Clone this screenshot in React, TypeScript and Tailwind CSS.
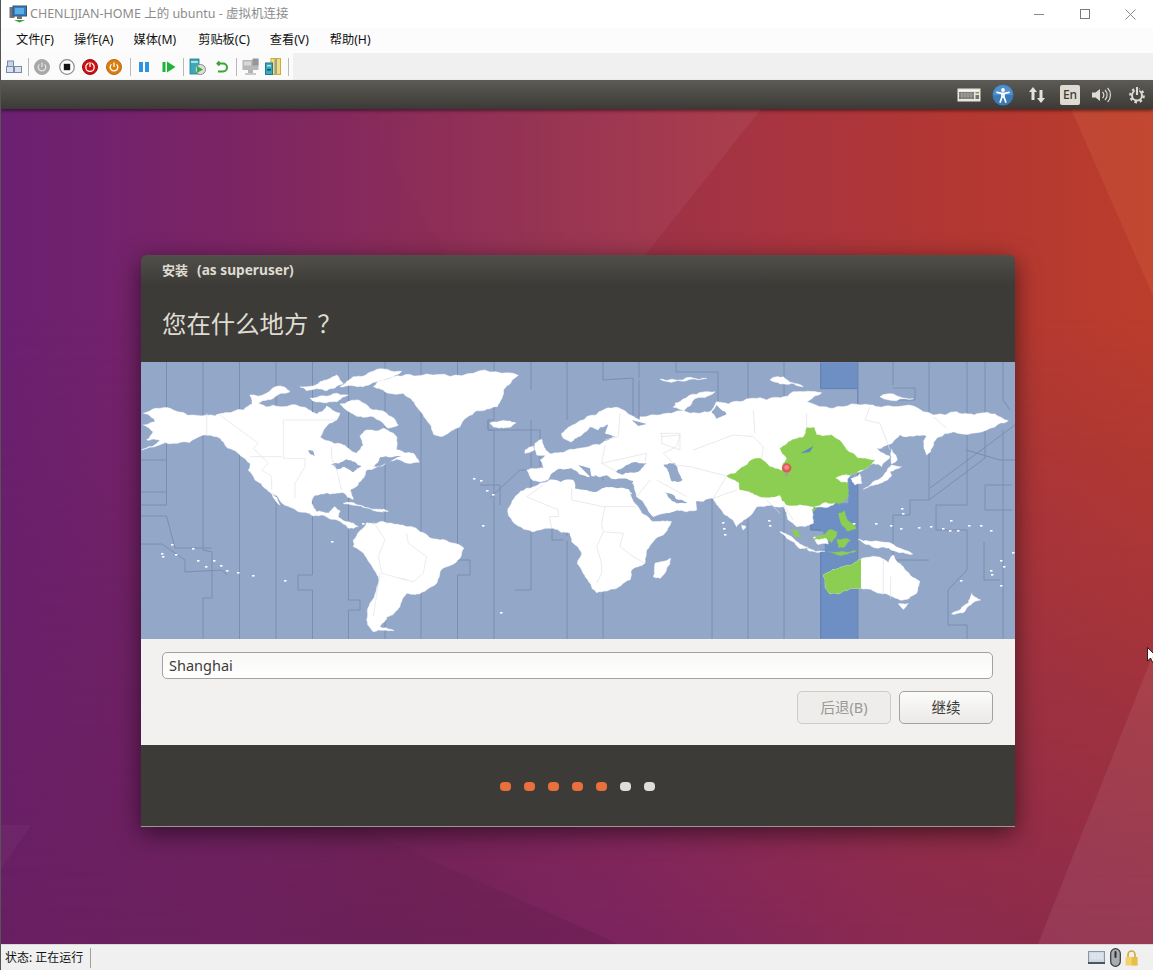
import React from "react";

const OCEAN = "#93a8c9";
const T_A = "translate(140 250) scale(0.3333)";
const T_B = "translate(490 400) scale(0.3333)";
const T_C = "translate(580 350) scale(0.3333)";

// irregular coastline: subdivides each edge with a seeded midpoint offset
const blob = (s: string) => {
  let p = s.trim().split(/\s+/).map((q) => q.split(",").map(Number));
  let seed = 7;
  for (const c of s) seed = (seed * 31 + c.charCodeAt(0)) % 233280;
  const rnd = () => {
    seed = (seed * 9301 + 49297) % 233280;
    return seed / 233280 - 0.5;
  };
  for (let it = 0; it < 3; it++) {
    const out: number[][] = [];
    for (let i = 0; i < p.length; i++) {
      const a = p[i];
      const b = p[(i + 1) % p.length];
      const dx = b[0] - a[0];
      const dy = b[1] - a[1];
      const k = rnd() * 0.24;
      out.push(a, [(a[0] + b[0]) / 2 - dy * k, (a[1] + b[1]) / 2 + dx * k]);
    }
    p = out;
  }
  return "M" + p.map((q) => `${q[0].toFixed(1)} ${q[1].toFixed(1)}`).join("L") + "Z";
};
const B = ({ p }: { p: string }) => <path d={blob(p)} />;

const AUS = "730,675 790,650 842,628 890,620 925,640 940,615 970,650 1020,695 1010,730 960,750 900,730 843,715 800,722 750,732 735,700";

const WorldMap = () => (
  <svg viewBox="141 362 874 277" width="874" height="277" className="block blur-[0.35px]">
    <rect x="141" y="362" width="874" height="277" fill={OCEAN} />
    <g transform={T_C}>
      <path d="M722 37H833V866H722V600L735 598L730 545L692 540V460H805V380H833V116H722Z" fill="#6e8fc4" />
      <path d="M722 37V116H833V37M722 866V600M833 116V866M692 460V540H722" fill="none" stroke="#5f7fb2" strokeWidth="3" />
    </g>
    <g stroke="#7a8eb0" strokeWidth="1" fill="none">
      <path d="M166.5 362V505H141M203 362V550L212 552V598H203V639M239.5 362V639M276 362V639M312.5 362V575H298V590H312.5V639M348.5 362V600H360V610H348.5V639M385 362V639M421 362V639M457.5 362V560H470V575H457.5V639M494 362V420H488V430H494V639M531 362V390M531 420V590H515M567 362V420M567 470V639" />
      <path d="M141 460H166.5V492H141M141 516H166.5L175 548H212M141 544H162L185 560V572L222 570L227 575" />
      <path d="M488 420V430H540V470M490 498L520 470H531M480 485H500V505M567 470V520H552V540H567" />
      <path d="M603 362V380L633 378V420H603V639M639 362V378M639 380V445L603 470M676 362V372H718V400L712 420V639M748 362V400M748 425V639M784 362V639" />
      <path d="M858 362V639M893 530V515H910V500H929V362M893 530V560H929M893 362V385M893 388H915V400H893M967 362V505H936V530H967V570L948 590V625H967V639M1003 362V400L1010 410M1003 430V639M985 485H1012M985 485V510H1012M984 542V580H1000M929 500L985 458V362" />
      <path d="M930 488L1015 425M966 450L1000 460H1015" />
    </g>

    {/* land */}
    <g transform={T_A} fill="#fff" stroke="#fff" strokeWidth="1.5" strokeLinejoin="round">
      <B p="5,600 60,572 20,570 40,545 10,525 45,515 10,490 90,475 200,495 250,490 310,480 340,460 420,470 480,470 530,492 560,468 600,490 590,510 555,535 540,562 580,580 625,595 650,610 670,585 660,560 680,540 730,535 770,560 770,600 820,610 838,637 770,628 740,640 680,660 665,690 630,720 640,748 610,728 560,728 525,735 515,760 530,785 565,790 585,770 600,782 595,800 625,815 655,830 625,835 580,808 520,798 470,782 430,762 395,725 420,765 380,718 345,690 325,660 330,640 300,615 265,595 240,565 190,555 100,580" />
      <B p="640,870 680,818 720,815 780,825 840,845 900,870 972,895 960,925 900,965 890,1000 850,1025 800,1030 780,1070 740,1100 720,1130 762,1142 700,1145 680,1110 690,1060 715,980 690,940 640,890" />
      <B p="700,410 760,380 860,372 1000,370 1135,376 1090,420 1072,470 1010,482 960,530 910,558 880,552 860,510 830,470 790,430 730,420" />
      <B p="330,435 420,408 450,425 400,445 340,468" />
      <B p="600,410 640,380 700,364 785,364 730,390 670,410" />
      <B p="480,410 540,395 590,375 610,400 560,422 500,422" />
      <B p="510,445 590,430 625,435 590,455 530,456" />
      <B p="600,462 660,452 700,480 762,505 775,525 745,535 700,500 640,492" />
      <B p="1050,520 1090,512 1125,518 1095,532 1060,530" />
      <B p="610,760 660,766 700,782 730,786 695,778 640,766" />
      <B p="715,778 745,784 720,786" />
    </g>
    <g transform={T_B} fill="#fff" stroke="#fff" strokeWidth="1.5" strokeLinejoin="round">
      <B p="55,325 75,290 110,265 150,250 190,235 250,235 255,265 320,275 345,250 410,250 425,280 455,340 490,365 545,365 520,405 470,450 465,490 425,510 420,540 380,565 320,578 300,550 275,510 262,490 275,460 245,425 240,400 190,385 125,395 80,375 55,345" />
      <B p="110,210 160,205 150,180 190,160 240,148 330,135 340,125 345,110 300,80 265,110 245,125 220,115 215,100 240,80 290,50 340,30 400,30 450,60 600,40 620,330 560,330 490,350 440,290 430,250 350,225 170,240 130,242" />
      <B p="105,150 130,138 132,150 105,160" />
      <B p="135,130 155,118 165,145 188,165 140,165" />
      <B p="5,68 40,62 78,68 60,82 20,82" />
      <B p="490,530 495,490 542,475 530,505 510,535" />
      <B p="555,10 590,-5 595,18 570,28" />
    </g>
    <g transform={T_C} fill="#fff" stroke="#fff" strokeWidth="1.5" strokeLinejoin="round">
      <B p="180,200 230,198 280,190 330,190 390,185 410,155 480,155 560,150 640,125 725,128 680,155 760,175 870,165 940,170 1060,195 1130,185 1200,190 1285,212 1230,235 1120,245 1095,250 1070,265 1040,315 1030,272 1000,272 960,285 890,295 930,320 905,350 880,340 850,360 810,375 800,400 795,440 760,465 700,470 698,500 700,520 650,530 625,510 610,470 575,465 530,470 490,510 470,530 430,490 400,445 340,450 280,490 200,470 180,300" />
      <B p="280,172 330,135 405,125 340,150 310,182" />
      <B p="570,90 610,80 670,110 600,102" />
      <B p="240,88 330,82 380,85 310,94" />
      <B p="900,140 1000,146 920,132" />
      <B p="600,545 640,565 685,592 662,596 620,565" />
      <B p="680,596 735,604 690,604" />
      <B p="700,562 740,562 745,582 715,584" />
      <B p="835,568 900,575 998,612 940,602 880,592" />
      <B p={AUS} />
      <B p="955,762 985,760 970,778" />
      <B p="1115,792 1165,760 1175,730 1202,750 1150,788" />
    </g>

    {/* seas */}
    <g transform={T_A} fill={OCEAN}>
      <B p="570,642 620,628 665,648 640,667 610,650 590,658" />
      <B p="505,600 520,603 525,618 510,612" />
      <B p="720,622 790,618 745,640 700,652" />
    </g>
    <g transform={T_B} fill={OCEAN}>
      <B p="175,238 200,210 245,205 265,220 300,240 320,255 315,225 345,245 430,243 425,270 355,262 320,275 255,265 250,240" />
      <polygon points="265,195 300,205 305,235" />
      <B p="378,215 410,195 470,190 445,215 395,224" />
      <B p="520,195 555,190 578,240 545,244 535,215" />
      <polygon points="420,280 445,298 494,358 470,342 430,302" />
      <polygon points="480,356 560,332 558,345 497,364" />
      <B p="525,275 560,298 592,308 560,310 535,292" />
      <B p="298,122 330,82 355,72 345,100 378,108 340,125 320,132" />
      <polygon points="425,60 470,72 445,78" />
      <polygon points="215,425 238,400 245,420" />
    </g>
    <g transform={T_C} fill={OCEAN}>
      <B p="440,192 410,165 395,188 410,207" />
      <B p="905,292 960,255 1040,258 1030,272 1040,318 945,322" />
    </g>
    <g transform={T_C} fill="#fff" stroke="#fff" strokeWidth="1.5">
      <B p="850,418 900,400 935,378 930,365 965,350 935,345 915,370 880,395" />
      <B p="935,298 952,330 935,342" />
      <B p="812,385 840,372 846,400 825,405" />
      <B p="485,525 498,530 490,540" />
    </g>

    {/* highlighted land */}
    <defs>
      <clipPath id="waus"><rect x="700" y="600" width="143" height="150" /></clipPath>
    </defs>
    <g transform={T_C} fill="#8bce52" stroke="#8bce52">
      <B p="440,378 490,350 540,325 570,350 605,362 620,325 600,295 625,275 670,262 680,232 702,232 710,255 755,255 790,285 835,325 885,332 860,355 810,375 765,385 805,400 805,440 775,460 700,470 620,465 600,435 530,435 480,420 478,400" />
      <g clipPath="url(#waus)"><path d={blob(AUS)} /></g>
      <B p="696,478 715,470 700,486" />
      <B p="775,490 795,482 802,510 830,535 800,542 780,510" />
      <B p="632,538 652,540 667,562 645,560" />
      <B p="700,568 750,538 772,545 755,578 735,563" />
      <B p="770,568 812,570 792,592 775,592" />
      <B p="745,605 830,602 800,613" />
      <B p="778,450 793,452 778,464" />
    </g>

    {/* borders */}
    <g transform={T_A} fill="none" stroke="#dfe2e7" strokeWidth="2">
      <path d="M200 490V555M240 495L300 540L355 580L340 595L385 640L365 660L395 680V720M430 510H590M430 510V625H495V650L465 700V745M575 590V625L590 660L605 720M330 620H425" />
      <path d="M700 815L735 870L715 920L725 970L780 985L800 990M720 970L700 1100M800 850L805 880L860 920L850 970L820 995L780 985" />
    </g>
    <g transform={T_B} fill="none" stroke="#dde0e5" strokeWidth="2">
      <path d="M110 290L160 255M110 290L205 330V350H178L185 385M245 265V300L340 320H440M345 320L335 370L340 395L400 400L390 440L430 470M340 395L320 440L335 490V520L320 550M465 490L430 470M345 135L335 190L380 215M335 190L470 160L465 185M510 100H570V150L515 130V100M390 40L385 110L345 120M500 240L590 290M440 290L480 240" />
    </g>
    <g transform={T_C}>
      <polygon points="662,310 700,288 690,306" fill="#5f88be" />
      <g fill="none" stroke="#dde0e5" strokeWidth="2">
        <path d="M245 260L300 255L290 290L250 310L285 345L330 350L440 378M340 300L460 255L520 260L550 290L545 325M520 180L525 250M680 190L680 230M870 170L855 210L900 220L930 300M1060 200L1100 235M440 378L400 445M400 445L470 420M550 440L600 490M610 465L640 510M910 630V730M932 680V745" />
      </g>
      <circle cx="620" cy="354" r="13" fill="#e8595a" stroke="#c94a4a" strokeWidth="2" />
      <circle cx="620" cy="352" r="7" fill="#f48a8a" />
      <rect x="616" y="367" width="7" height="12" fill="#a0a0a0" />
    </g>
    <g fill="#fff">
      {[[161,553],[162,556],[171,544],[175,554],[192,548],[197,560],[205,566],[213,560],[220,565],[226,570],[237,572],[252,575],[284,580],[362,523],[373,543],[331,541],[473,478],[480,480],[486,490],[500,612],[492,494],[482,525],[853,523],[875,523],[890,525],[900,528],[918,527],[930,526],[942,528],[949,530],[957,530],[968,525],[980,525],[990,530],[950,520],[1012,552],[1000,560],[1003,566],[990,570],[1000,585],[960,580],[991,574],[722,522],[723,528],[724,534],[901,508],[902,513],[768,520],[769,525]].map(([x, y], i) => (
        <rect key={i} x={x} y={y} width="2.5" height="1.6" />
      ))}
    </g>
  </svg>
);

const PowerBtn = ({ bg, ring, line }: { bg: string; ring?: string; line: string }) => (
  <svg width="16" height="16" viewBox="0 0 16 16" className="block">
    <circle cx="8" cy="8" r="7.5" fill={bg} stroke={ring || bg} />
    <path d="M5.4 5.4a3.8 3.8 0 1 0 5.2 0" fill="none" stroke={line} strokeWidth="1.3" />
    <path d="M8 3.6V8" stroke={line} strokeWidth="1.3" />
  </svg>
);

const Sep = ({ c }: { c: string }) => <div className={`w-px h-[18px] bg-[#b9b9b9] shrink-0 ${c}`} />;

const Toolbar = () => (
  <div className="flex items-center h-[27px] w-[292px] bg-[#fbfbfb] shrink-0">
    <svg width="16" height="14" viewBox="0 0 16 14" className="ml-[5px] shrink-0">
      <rect x="1.5" y="1" width="6" height="5.5" fill="#c7d3e6" stroke="#7b8aa6" />
      <rect x="0.5" y="6.5" width="7" height="6" fill="#d9e1ee" stroke="#7b8aa6" />
      <rect x="8.5" y="6.5" width="7" height="6" fill="#d9e1ee" stroke="#7b8aa6" />
    </svg>
    <Sep c="ml-[6px]" />
    <div className="ml-[5px]"><PowerBtn bg="#a8a8a8" line="#e2e2e2" /></div>
    <svg width="16" height="16" viewBox="0 0 16 16" className="ml-[9px] shrink-0">
      <circle cx="8" cy="8" r="7.3" fill="#fff" stroke="#8b8b8b" strokeWidth="1.2" />
      <rect x="4.8" y="4.8" width="6.4" height="6.4" fill="#151515" />
    </svg>
    <svg width="16" height="16" viewBox="0 0 16 16" className="ml-[7px] shrink-0">
      <circle cx="8" cy="8" r="7.5" fill="#cf1010" stroke="#9c0c0c" />
      <circle cx="8" cy="8.2" r="4.2" fill="none" stroke="#fff" strokeWidth="1.3" />
      <path d="M8 3V8" stroke="#cf1010" strokeWidth="3" />
      <path d="M8 3.2V8" stroke="#fff" strokeWidth="1.3" />
    </svg>
    <div className="ml-[8px]"><PowerBtn bg="#dc7d12" ring="#b9680e" line="#fff" /></div>
    <Sep c="ml-[8px]" />
    <svg width="12" height="12" viewBox="0 0 12 12" className="ml-[7px] shrink-0">
      <rect x="1" y="1" width="4" height="10" fill="#2d93e0" />
      <rect x="7" y="1" width="4" height="10" fill="#2d93e0" />
    </svg>
    <svg width="14" height="12" viewBox="0 0 14 12" className="ml-[12px] shrink-0">
      <rect x="0.5" y="1" width="3" height="10" fill="#21b23a" />
      <path d="M5 0.5L13.5 6L5 11.5Z" fill="#21b23a" />
    </svg>
    <Sep c="ml-[7px]" />
    <svg width="17" height="17" viewBox="0 0 17 17" className="ml-[5px] shrink-0">
      <rect x="1" y="1" width="9" height="15" fill="#39a9bb" stroke="#1f7c8c" strokeWidth="0.8" />
      <rect x="2" y="3" width="7" height="2" fill="#a7e0e8" />
      <circle cx="11.5" cy="11.5" r="5" fill="#dedede" stroke="#8b8b8b" />
      <path d="M8 8L14 11.5L8 15Z" fill="#31b046" />
    </svg>
    <svg width="12" height="14" viewBox="0 0 12 14" className="ml-[10px] shrink-0">
      <path d="M3.5 1.5L1.5 3.5L3.5 5.5M1.5 3.5H7a3.8 3.8 0 1 1 0 8H2" fill="none" stroke="#3aa535" strokeWidth="2" />
    </svg>
    <Sep c="ml-[8px]" />
    <svg width="17" height="17" viewBox="0 0 17 17" className="ml-[5px] shrink-0">
      <rect x="0.5" y="2" width="16" height="10" fill="#b8b8b8" />
      <rect x="2" y="3.5" width="7" height="4" fill="#d8d8d8" />
      <rect x="10.5" y="0.5" width="6" height="7" fill="#969696" />
      <rect x="6" y="12" width="5" height="3" fill="#b5b5b5" />
      <rect x="3" y="15" width="11" height="2" fill="#c9c9c9" />
    </svg>
    <svg width="16" height="17" viewBox="0 0 16 17" className="ml-[6px] shrink-0">
      <rect x="6" y="0.5" width="9.5" height="16" fill="#f2dc7e" stroke="#c8ac3e" />
      <rect x="9.5" y="1" width="2.5" height="15" fill="#a3a28e" />
      <rect x="0.5" y="5" width="7" height="11.5" fill="#39a9bb" stroke="#1f7c8c" />
      <rect x="2" y="7" width="4" height="1.5" fill="#b3e6ec" />
      <rect x="2" y="11" width="4" height="1.5" fill="#0e5562" />
    </svg>
    <Sep c="ml-[7px]" />
  </div>
);

const Panel = () => (
  <div className="h-[29px] bg-[linear-gradient(#5d5b55,#3b3a36)] flex items-center justify-end shrink-0 shadow-[0_2px_3px_rgba(0,0,0,0.45)] relative z-10">
    <svg width="24" height="14" viewBox="0 0 24 14" className="mr-[11px]">
      <rect x="0.5" y="0.5" width="23" height="13" fill="#e8e6e0" />
      <rect x="2" y="2" width="20" height="1" fill="#f8f8f4" />
      <rect x="2" y="4" width="15" height="7" fill="#77756f" />
      <path d="M2 6H17M2 8H17M5 4V11M8 4V11M11 4V11M14 4V11" stroke="#c5c3bc" strokeWidth="0.5" />
      <rect x="18.5" y="4" width="3.5" height="1.5" fill="#75a84e" />
      <rect x="18.5" y="7" width="3.5" height="4" fill="#77756f" />
    </svg>
    <svg width="22" height="22" viewBox="0 0 22 22" className="mr-[14px]">
      <circle cx="11" cy="11" r="10.5" fill="#3a7ab8" />
      <path d="M1 11a10 10 0 0 1 20 0" fill="#4f8fca" />
      <circle cx="11" cy="6" r="1.9" fill="#fff" />
      <path d="M5 8.4L9.5 9.4H12.5L17 8.4M10 9.4V13L8.2 18M12 9.4V13L13.8 18M10 13H12" fill="none" stroke="#fff" strokeWidth="1.7" strokeLinecap="round" />
    </svg>
    <svg width="18" height="18" viewBox="0 0 18 18" className="mr-[14px]">
      <path d="M5 1L9 6H6.5V14H3.5V6H1Z" fill="#e4e2db" />
      <path d="M13 17L9 12H11.5V4H14.5V12H17Z" fill="#e4e2db" />
    </svg>
    <div className="w-5 h-5 bg-[#dfdbd2] rounded-[2px] flex items-center justify-center text-[12px] font-medium text-[#3c3b37] mr-[12px] leading-none">En</div>
    <svg width="20" height="16" viewBox="0 0 20 16" className="mr-[16px]">
      <path d="M0 5.5H3.5L8 2V14L3.5 10.5H0Z" fill="#dfdbd2" />
      <path d="M10.5 5a4 4 0 0 1 0 6M13 3a7 7 0 0 1 0 10M15.6 1a10 10 0 0 1 0 14" fill="none" stroke="#dfdbd2" strokeWidth="1.2" />
    </svg>
    <svg width="18" height="18" viewBox="0 0 18 18" className="mr-[7px]">
      <circle cx="9" cy="9.5" r="6.8" fill="none" stroke="#dfdbd2" strokeWidth="2.2" strokeDasharray="2.6 2.7" />
      <circle cx="9" cy="9.5" r="5" fill="none" stroke="#dfdbd2" strokeWidth="2" />
      <path d="M9 1V9" stroke="#46453f" strokeWidth="4.5" />
      <path d="M9 1V9" stroke="#dfdbd2" strokeWidth="2.2" />
    </svg>
  </div>
);

const Wallpaper = () => (
  <svg viewBox="0 0 1153 835" width="1153" height="835" preserveAspectRatio="none" className="absolute inset-0">
    <defs>
      <linearGradient id="wpt" x1="0" y1="0" x2="1" y2="0">
        <stop offset="0" stopColor="#6b2072" />
        <stop offset="0.18" stopColor="#7a2466" />
        <stop offset="0.36" stopColor="#8b2c58" />
        <stop offset="0.62" stopColor="#a33344" />
        <stop offset="0.82" stopColor="#b33733" />
        <stop offset="1" stopColor="#bb3d2c" />
      </linearGradient>
      <linearGradient id="wpb" x1="0" y1="0" x2="1" y2="0">
        <stop offset="0" stopColor="#681f62" />
        <stop offset="0.35" stopColor="#6f2159" />
        <stop offset="0.54" stopColor="#7c245f" />
        <stop offset="0.78" stopColor="#8a2a50" />
        <stop offset="1" stopColor="#8f2c48" />
      </linearGradient>
      <linearGradient id="wpm" x1="0" y1="0" x2="0" y2="1">
        <stop offset="0.25" stopColor="#000" />
        <stop offset="1" stopColor="#fff" />
      </linearGradient>
      <mask id="wpmask"><rect width="1153" height="835" fill="url(#wpm)" /></mask>
      <linearGradient id="wedge" x1="200" y1="0" x2="620" y2="0" gradientUnits="userSpaceOnUse">
        <stop offset="0" stopColor="#000" stopOpacity="0" />
        <stop offset="1" stopColor="#000" stopOpacity="0.08" />
      </linearGradient>
      <linearGradient id="topf" x1="360" y1="0" x2="740" y2="0" gradientUnits="userSpaceOnUse">
        <stop offset="0" stopColor="#fff" stopOpacity="0" />
        <stop offset="1" stopColor="#fff" stopOpacity="0.05" />
      </linearGradient>
    </defs>
    <rect width="1153" height="835" fill="url(#wpt)" />
    <rect width="1153" height="835" fill="url(#wpb)" mask="url(#wpmask)" />
    <polygon points="360,0 760,0 530,290" fill="url(#topf)" />
    <polygon points="1070,0 1153,0 1153,189" fill="#ffb060" opacity="0.1" />
    <polygon points="1153,543 1153,835 1037,835" fill="#fff" opacity="0.07" />
    <polygon points="200,648 618,835 200,835" fill="url(#wedge)" />
    <polygon points="0,760 30,716 0,716" fill="#fff" opacity="0.03" />
  </svg>
);

export default function App() {
  return (
    <div className="w-[1153px] h-[970px] flex flex-col overflow-hidden bg-white border-l border-[#555] font-['Noto_Sans','Noto_Sans_CJK_SC',sans-serif]">
      <div className="h-7 flex items-center bg-white shrink-0">
        <svg width="18" height="18" viewBox="0 0 18 18" className="ml-[8px] shrink-0">
          <rect x="0.5" y="2" width="5" height="11" fill="#6d7680" />
          <rect x="4" y="1" width="13.5" height="10" fill="#2c7fc8" stroke="#4a4f55" />
          <rect x="6" y="3" width="9" height="6" fill="#59aee8" />
          <path d="M8 11H13V14H8Z" fill="#6c7278" />
          <path d="M5 15H16L10.5 17.5Z" fill="#3aa33a" />
        </svg>
        <span className="ml-[3px] text-[12.5px] text-[#8c8c8c] leading-none whitespace-nowrap">CHENLIJIAN-HOME 上的 ubuntu - 虚拟机连接</span>
        <div className="ml-auto flex items-center">
          <div className="w-[46px] h-7 flex items-center justify-center">
            <div className="w-[10px] h-px bg-[#8a8a8a]" />
          </div>
          <div className="w-[46px] h-7 flex items-center justify-center">
            <div className="w-[10px] h-[10px] border border-[#7c7c7c]" />
          </div>
          <div className="w-[45px] h-7 flex items-center justify-center">
            <svg width="11" height="11" viewBox="0 0 11 11"><path d="M0.5 0.5L10.5 10.5M10.5 0.5L0.5 10.5" stroke="#8a8a8a" /></svg>
          </div>
        </div>
      </div>
      <div className="h-[25px] flex items-center gap-5 pl-[15px] bg-[#fcfcfc] text-[12.2px] text-[#111] shrink-0 whitespace-nowrap">
        <span>文件(F)</span><span>操作(A)</span><span>媒体(M)</span><span className="ml-[2px]">剪贴板(C)</span><span>查看(V)</span><span className="ml-[1px]">帮助(H)</span>
      </div>
      <div className="h-[27px] flex bg-[#f0f0f0] shrink-0"><Toolbar /></div>
      <Panel />
      <div className="relative flex-1 overflow-hidden">
        <Wallpaper />
        <div className="relative ml-[140px] mt-[146px] w-[874px] rounded-t-[6px] shadow-[0_6px_24px_rgba(0,0,0,0.55)] overflow-hidden">
          <div className="h-[107px] bg-[#3c3b37]">
            <div className="h-[30px] bg-[linear-gradient(#514f4a,#3c3b37)] pl-[21px] pt-[5px] text-[13px] font-bold text-[#dfdbd2] leading-[20px] whitespace-nowrap">安装<span className="ml-[9px] text-[13.7px]">(as superuser)</span></div>
            <div className="pl-[21px] pt-[20px] text-[24.4px] leading-[36px] text-[#dfdbd2] whitespace-nowrap font-['Noto_Sans_CJK_SC',sans-serif]">您在什么地方<span className="ml-[9px]">？</span></div>
          </div>
          <WorldMap />
          <div className="h-[106px] bg-[#f2f1ef] pl-[21px] pr-[22px] pt-[13px]">
            <div className="h-[27px] rounded-[5px] border border-[#a5a29c] bg-[linear-gradient(#f8f8f7,#ffffff)] flex items-center pl-[6px] text-[14.5px] text-[#3c3b37]">Shanghai</div>
            <div className="flex justify-end gap-2 mt-3">
              <div className="w-[94px] h-[33px] rounded-[5px] border border-[#cfccc7] bg-[#eeedeb] flex items-center justify-center text-[14.5px] text-[#9a9893]">后退(B)</div>
              <div className="w-[94px] h-[33px] rounded-[5px] border border-[#a5a29c] bg-[linear-gradient(#fbfbfa,#ebeae8)] flex items-center justify-center text-[14.5px] text-[#3c3b37]">继续</div>
            </div>
          </div>
          <div className="h-[82px] bg-[#3c3b37] flex items-center justify-center gap-[13px] pr-[2px] pt-[1px] border-b border-[#9a9894]">
            {["o1", "o2", "o3", "o4", "o5"].map((k) => <div key={k} className="w-[11px] h-[9px] rounded-[4px] bg-[#e9703c]" />)}
            {["w1", "w2"].map((k) => <div key={k} className="w-[11px] h-[9px] rounded-[4px] bg-[#dedddb]" />)}
          </div>
        </div>
        <svg width="8" height="18" viewBox="0 0 8 18" className="absolute left-[1146px] top-[538px]">
          <path d="M0.5 0.5V14L3.5 11L6 16L8 15L6 10H10Z" fill="#fff" stroke="#000" strokeWidth="0.8" />
        </svg>
      </div>
      <div className="h-[26px] bg-[#f0f0f0] flex items-center shrink-0 border-t border-[#d8d8d8]">
        <span className="ml-[4px] text-[12px] text-[#111]">状态: 正在运行</span>
        <div className="ml-[7px] w-px h-[20px] bg-[#a0a0a0]" />
        <div className="ml-auto flex items-center mr-[15px]">
          <svg width="17" height="13" viewBox="0 0 17 13">
            <rect x="0.5" y="0.5" width="16" height="11" fill="#cfd7e2" stroke="#8a97a8" />
            <path d="M2 3H15M2 5H15M2 7H15M4 2V9M7 2V9M10 2V9M13 2V9" stroke="#eef2f6" strokeWidth="0.6" />
            <rect x="0" y="11" width="17" height="2" fill="#4a5560" />
          </svg>
          <svg width="11" height="19" viewBox="0 0 11 19" className="ml-[5px]">
            <rect x="0.7" y="0.7" width="9.6" height="17.6" rx="4.8" fill="#a9adb2" stroke="#33373c" strokeWidth="1.2" />
            <rect x="4.5" y="3" width="2" height="7" rx="1" fill="#2b2e33" />
          </svg>
          <svg width="13" height="16" viewBox="0 0 13 16" className="ml-[4px]">
            <path d="M3 7V4.5a3.5 3.5 0 0 1 7 0V7" fill="none" stroke="#cda93f" strokeWidth="1.6" />
            <rect x="0.5" y="7" width="12" height="8.5" fill="#f3d36c" />
            <rect x="6.5" y="7" width="6" height="8.5" fill="#e7bd4b" />
          </svg>
        </div>
      </div>
    </div>
  );
}
